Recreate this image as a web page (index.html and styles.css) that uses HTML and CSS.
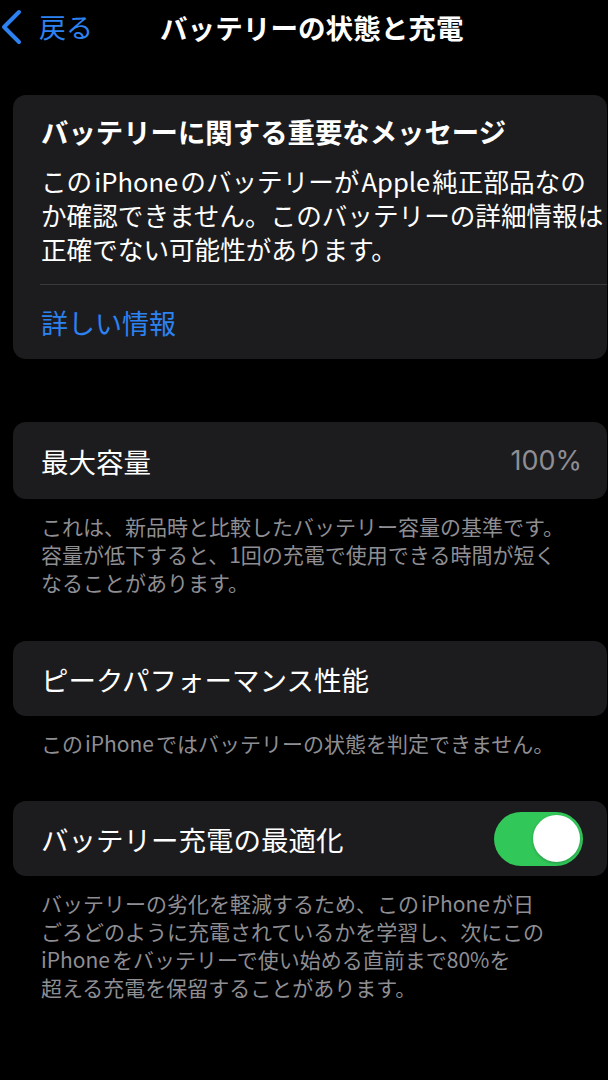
FILE: index.html
```html
<!DOCTYPE html>
<html lang="ja">
<head>
<meta charset="utf-8">
<title>バッテリーの状態と充電</title>
<link rel="stylesheet" href="styles.css">
</head>
<body>
<header class="nav">
  <a class="back">
    <svg class="chevron" width="24" height="36" viewBox="0 0 24 36" aria-hidden="true">
      <path d="M19 3 L4 18 L19 33" fill="none" stroke="#2d82f2" stroke-width="4" stroke-linecap="round" stroke-linejoin="round"/>
    </svg>
    <span class="back-label">戻る</span>
  </a>
  <h1 class="nav-title">バッテリーの状態と充電</h1>
</header>

<main class="content">
  <section class="card message">
    <h2 class="message-title">バッテリーに関する重要なメッセージ</h2>
    <p class="message-body">この<span class="en">iPhone</span>のバッテリーが<span class="en">Apple</span>純正部品なの<br>か確認できません。このバッテリーの詳細情報は<br>正確でない可能性があります。</p>
    <div class="separator"></div>
    <a class="link">詳しい情報</a>
  </section>

  <section class="card row first-row">
    <span class="row-label">最大容量</span>
    <span class="row-value">100%</span>
  </section>
  <p class="footer first-footer">これは、新品時と比較したバッテリー容量の基準です。<br>容量が低下すると、1回の充電で使用できる時間が短く<br>なることがあります。</p>

  <section class="card row">
    <span class="row-label">ピークパフォーマンス性能</span>
  </section>
  <p class="footer">この<span class="en">iPhone</span>ではバッテリーの状態を判定できません。</p>

  <section class="card row toggle-row">
    <span class="row-label">バッテリー充電の最適化</span>
    <span class="toggle"><span class="knob"></span></span>
  </section>
  <p class="footer">バッテリーの劣化を軽減するため、この<span class="en">iPhone</span>が日<br>ごろどのように充電されているかを学習し、次にこの<br><span class="en en-start">iPhone</span>をバッテリーで使い始める直前まで80%を<br>超える充電を保留することがあります。</p>
</main>
</body>
</html>
```
FILE: styles.css
```css
html, body {
  margin: 0;
  padding: 0;
  background: #000;
}
body {
  width: 608px;
  height: 1080px;
  overflow: hidden;
  color: #fff;
  font-family: "Noto Sans CJK JP", sans-serif;
}

.nav {
  display: flex;
  align-items: center;
  height: 34px;
  padding-top: 10px;
}
.back {
  display: flex;
  align-items: center;
  color: #2d82f2;
}
.chevron {
  display: block;
}
.back-label {
  margin-left: 15px;
  font-size: 27px;
  line-height: 34px;
}
.nav-title {
  margin: 0 0 0 67px;
  font-size: 27.6px;
  font-weight: 700;
  line-height: 34px;
}

.content {
  padding-top: 51px;
}

.card {
  background: #1c1c1e;
  border-radius: 13px;
  margin: 0 1px 0 13px;
}

.message {
  padding: 19px 0 19px 28px;
}
.message-title {
  margin: 0;
  font-size: 27.4px;
  font-weight: 700;
  line-height: 34px;
}
.message-body {
  margin: 16px 0 0;
  font-size: 25.6px;
  line-height: 34px;
}
.en {
  margin: 0 2px;
}
.en-start {
  margin-left: 0;
}
.separator {
  height: 1px;
  background: #3a3a3c;
  margin: 18px 0 0 -1px;
}
.link {
  display: block;
  margin-top: 21px;
  color: #2d82f2;
  font-size: 27px;
  line-height: 34px;
}

.row {
  display: flex;
  align-items: center;
  justify-content: space-between;
  height: 75px;
  padding: 0 25px 0 28px;
  margin-top: 45px;
}
.first-row {
  height: 77px;
  margin-top: 63px;
}
.row-label {
  font-size: 27.5px;
  line-height: 34px;
}
.row-value {
  font-family: "Inter", "Noto Sans CJK JP", sans-serif;
  font-size: 27px;
  line-height: 34px;
  color: #8e8e93;
}

.toggle-row {
  margin-top: 44px;
  padding-right: 24px;
}
.toggle {
  display: flex;
  align-items: center;
  justify-content: flex-end;
  width: 89px;
  height: 54px;
  border-radius: 27px;
  background: #32c759;
  box-sizing: border-box;
  padding-right: 3px;
}
.knob {
  width: 47px;
  height: 47px;
  border-radius: 50%;
  background: #fff;
  box-shadow: 0 1px 3px rgba(0, 0, 0, 0.25);
}

.footer {
  margin: 13px 0 0 41px;
  font-size: 21px;
  line-height: 28px;
  color: #8e8e93;
}
```
